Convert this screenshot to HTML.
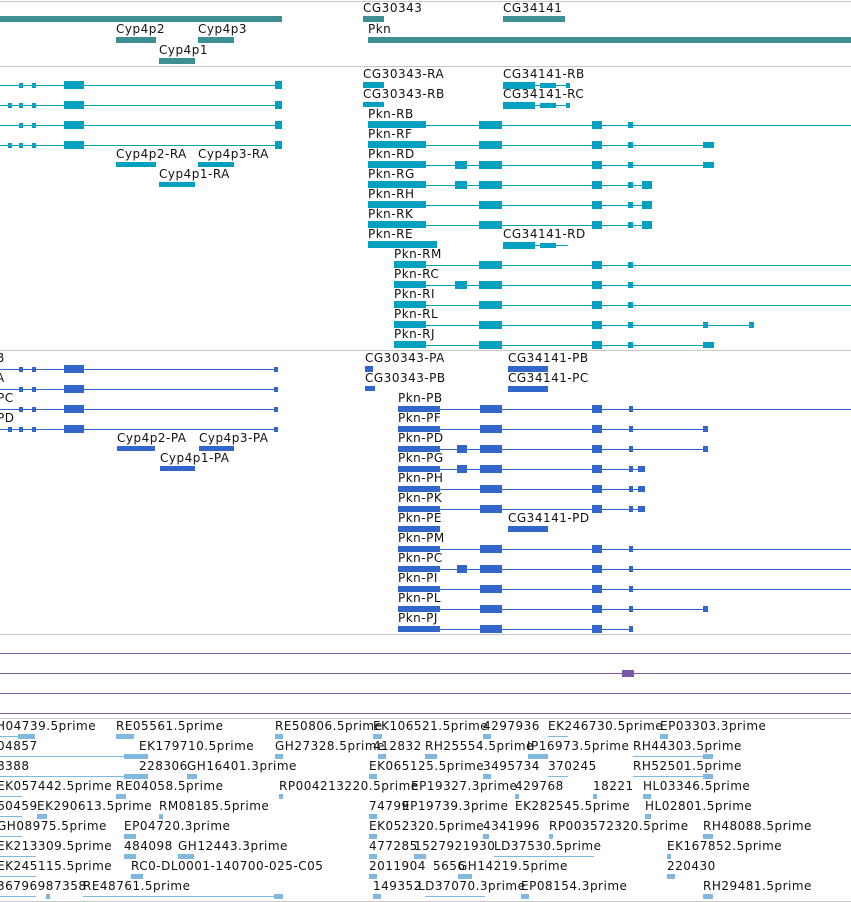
<!DOCTYPE html>
<html><head><meta charset="utf-8"><style>
body{margin:0;width:851px;height:902px;overflow:hidden;background:#fff;position:relative;font-family:"DejaVu Sans","Liberation Sans",sans-serif;font-size:12px;color:#111}
div{position:absolute}
.t{white-space:nowrap;line-height:14px;letter-spacing:0.5px}
.g{height:1px;background:#c8c8c8;left:0;width:851px}
.p{height:1px;background:#7a5aa8;left:0;width:851px}
.a{background:#3d8f91}
.b{background:#00a0c0}
.c{background:#3366cc}
.d{background:#80b8e0}
</style></head><body>
<div class="g" style="top:1px"></div>
<div class="g" style="top:66px"></div>
<div class="g" style="top:350px"></div>
<div class="g" style="top:634px"></div>
<div class="p" style="top:653px"></div>
<div class="p" style="top:673px"></div>
<div class="p" style="top:693px"></div>
<div class="p" style="top:713px"></div>
<div style="left:622px;top:670px;width:12px;height:7px;background:#7a5aa8"></div>
<div class="g" style="top:718px"></div>
<div class="g" style="top:901px"></div>

<div class="a" style="left:0;top:16px;width:282px;height:6px"></div>
<div class="t" style="left:363px;top:1px">CG30343</div>
<div class="a" style="left:363px;top:16px;width:21px;height:6px"></div>
<div class="t" style="left:503px;top:1px">CG34141</div>
<div class="a" style="left:503px;top:16px;width:62px;height:6px"></div>
<div class="t" style="left:116px;top:22px">Cyp4p2</div>
<div class="a" style="left:116px;top:37px;width:40px;height:6px"></div>
<div class="t" style="left:198px;top:22px">Cyp4p3</div>
<div class="a" style="left:198px;top:37px;width:36px;height:6px"></div>
<div class="t" style="left:159px;top:43px">Cyp4p1</div>
<div class="a" style="left:159px;top:58px;width:36px;height:6px"></div>
<div class="t" style="left:368px;top:22px">Pkn</div>
<div class="a" style="left:368px;top:37px;width:483px;height:6px"></div>

<div class="b" style="left:0;top:85px;width:282px;height:1px"></div>
<div class="b" style="left:0;top:105px;width:282px;height:1px"></div>
<div class="b" style="left:0;top:125px;width:282px;height:1px"></div>
<div class="b" style="left:0;top:145px;width:282px;height:1px"></div>
<div class="b" style="left:64px;top:81px;width:20px;height:8px"></div>
<div class="b" style="left:64px;top:101px;width:20px;height:8px"></div>
<div class="b" style="left:64px;top:121px;width:20px;height:8px"></div>
<div class="b" style="left:64px;top:141px;width:20px;height:8px"></div>
<div class="b" style="left:275px;top:81px;width:7px;height:8px"></div>
<div class="b" style="left:275px;top:101px;width:7px;height:8px"></div>
<div class="b" style="left:275px;top:121px;width:7px;height:8px"></div>
<div class="b" style="left:275px;top:141px;width:7px;height:8px"></div>
<div class="b" style="left:19px;top:83px;width:4px;height:5px"></div><div class="b" style="left:32px;top:83px;width:4px;height:5px"></div>
<div class="b" style="left:8px;top:103px;width:4px;height:5px"></div><div class="b" style="left:19px;top:103px;width:4px;height:5px"></div><div class="b" style="left:32px;top:103px;width:4px;height:5px"></div>
<div class="b" style="left:19px;top:123px;width:4px;height:5px"></div><div class="b" style="left:32px;top:123px;width:4px;height:5px"></div>
<div class="b" style="left:8px;top:143px;width:4px;height:5px"></div><div class="b" style="left:19px;top:143px;width:4px;height:5px"></div><div class="b" style="left:32px;top:143px;width:4px;height:5px"></div>
<div class="t" style="left:116px;top:147px">Cyp4p2-RA</div>
<div class="b" style="left:116px;top:162px;width:40px;height:5px"></div>
<div class="t" style="left:198px;top:147px">Cyp4p3-RA</div>
<div class="b" style="left:198px;top:162px;width:36px;height:5px"></div>
<div class="t" style="left:159px;top:167px">Cyp4p1-RA</div>
<div class="b" style="left:159px;top:182px;width:36px;height:5px"></div>

<div class="t" style="left:363px;top:67px">CG30343-RA</div>
<div class="b" style="left:363px;top:82px;width:21px;height:6px"></div>
<div class="t" style="left:363px;top:87px">CG30343-RB</div>
<div class="b" style="left:363px;top:102px;width:21px;height:5px"></div>
<div class="t" style="left:503px;top:67px">CG34141-RB</div>
<div class="b" style="left:503px;top:82px;width:32px;height:7px"></div><div class="b" style="left:535px;top:85px;width:35px;height:1px"></div><div class="b" style="left:540px;top:83px;width:16px;height:5px"></div><div class="b" style="left:566px;top:83px;width:4px;height:5px"></div>
<div class="t" style="left:503px;top:87px">CG34141-RC</div>
<div class="b" style="left:503px;top:102px;width:32px;height:7px"></div><div class="b" style="left:535px;top:105px;width:35px;height:1px"></div><div class="b" style="left:540px;top:103px;width:16px;height:5px"></div><div class="b" style="left:566px;top:103px;width:4px;height:5px"></div>

<div class="t" style="left:368px;top:107px">Pkn-RB</div>
<div class="b" style="left:368px;top:121px;width:58px;height:7px"></div><div class="b" style="left:426px;top:125px;width:425px;height:1px"></div><div class="b" style="left:479px;top:121px;width:23px;height:8px"></div><div class="b" style="left:592px;top:121px;width:10px;height:8px"></div><div class="b" style="left:628px;top:122px;width:5px;height:6px"></div>
<div class="t" style="left:368px;top:127px">Pkn-RF</div>
<div class="b" style="left:368px;top:141px;width:58px;height:7px"></div><div class="b" style="left:426px;top:145px;width:288px;height:1px"></div><div class="b" style="left:479px;top:141px;width:23px;height:8px"></div><div class="b" style="left:592px;top:141px;width:10px;height:8px"></div><div class="b" style="left:628px;top:142px;width:5px;height:6px"></div><div class="b" style="left:703px;top:142px;width:11px;height:6px"></div>
<div class="t" style="left:368px;top:147px">Pkn-RD</div>
<div class="b" style="left:368px;top:161px;width:58px;height:7px"></div><div class="b" style="left:426px;top:165px;width:288px;height:1px"></div><div class="b" style="left:455px;top:161px;width:12px;height:8px"></div><div class="b" style="left:479px;top:161px;width:23px;height:8px"></div><div class="b" style="left:592px;top:161px;width:10px;height:8px"></div><div class="b" style="left:628px;top:162px;width:5px;height:6px"></div><div class="b" style="left:703px;top:162px;width:11px;height:6px"></div>
<div class="t" style="left:368px;top:167px">Pkn-RG</div>
<div class="b" style="left:368px;top:181px;width:58px;height:7px"></div><div class="b" style="left:426px;top:185px;width:226px;height:1px"></div><div class="b" style="left:455px;top:181px;width:12px;height:8px"></div><div class="b" style="left:479px;top:181px;width:23px;height:8px"></div><div class="b" style="left:592px;top:181px;width:10px;height:8px"></div><div class="b" style="left:628px;top:182px;width:5px;height:6px"></div><div class="b" style="left:642px;top:181px;width:10px;height:8px"></div>
<div class="t" style="left:368px;top:187px">Pkn-RH</div>
<div class="b" style="left:368px;top:201px;width:58px;height:7px"></div><div class="b" style="left:426px;top:205px;width:226px;height:1px"></div><div class="b" style="left:479px;top:201px;width:23px;height:8px"></div><div class="b" style="left:592px;top:201px;width:10px;height:8px"></div><div class="b" style="left:628px;top:202px;width:5px;height:6px"></div><div class="b" style="left:642px;top:201px;width:10px;height:8px"></div>
<div class="t" style="left:368px;top:207px">Pkn-RK</div>
<div class="b" style="left:368px;top:221px;width:58px;height:7px"></div><div class="b" style="left:426px;top:225px;width:226px;height:1px"></div><div class="b" style="left:479px;top:221px;width:23px;height:8px"></div><div class="b" style="left:592px;top:221px;width:10px;height:8px"></div><div class="b" style="left:628px;top:222px;width:5px;height:6px"></div><div class="b" style="left:642px;top:221px;width:10px;height:8px"></div>
<div class="t" style="left:368px;top:227px">Pkn-RE</div>
<div class="b" style="left:368px;top:241px;width:69px;height:7px"></div>
<div class="t" style="left:503px;top:227px">CG34141-RD</div>
<div class="b" style="left:503px;top:242px;width:32px;height:7px"></div><div class="b" style="left:535px;top:245px;width:33px;height:1px"></div><div class="b" style="left:540px;top:243px;width:16px;height:5px"></div>
<div class="t" style="left:394px;top:247px">Pkn-RM</div>
<div class="b" style="left:394px;top:261px;width:32px;height:7px"></div><div class="b" style="left:426px;top:265px;width:425px;height:1px"></div><div class="b" style="left:479px;top:261px;width:23px;height:8px"></div><div class="b" style="left:592px;top:261px;width:10px;height:8px"></div><div class="b" style="left:628px;top:262px;width:5px;height:6px"></div>
<div class="t" style="left:394px;top:267px">Pkn-RC</div>
<div class="b" style="left:394px;top:281px;width:32px;height:7px"></div><div class="b" style="left:426px;top:285px;width:425px;height:1px"></div><div class="b" style="left:455px;top:281px;width:12px;height:8px"></div><div class="b" style="left:479px;top:281px;width:23px;height:8px"></div><div class="b" style="left:592px;top:281px;width:10px;height:8px"></div><div class="b" style="left:628px;top:282px;width:5px;height:6px"></div>
<div class="t" style="left:394px;top:287px">Pkn-RI</div>
<div class="b" style="left:394px;top:301px;width:32px;height:7px"></div><div class="b" style="left:426px;top:305px;width:425px;height:1px"></div><div class="b" style="left:479px;top:301px;width:23px;height:8px"></div><div class="b" style="left:592px;top:301px;width:10px;height:8px"></div><div class="b" style="left:628px;top:302px;width:5px;height:6px"></div>
<div class="t" style="left:394px;top:307px">Pkn-RL</div>
<div class="b" style="left:394px;top:321px;width:32px;height:7px"></div><div class="b" style="left:426px;top:325px;width:327px;height:1px"></div><div class="b" style="left:479px;top:321px;width:23px;height:8px"></div><div class="b" style="left:592px;top:321px;width:10px;height:8px"></div><div class="b" style="left:628px;top:322px;width:5px;height:6px"></div><div class="b" style="left:703px;top:322px;width:5px;height:6px"></div><div class="b" style="left:749px;top:322px;width:5px;height:6px"></div>
<div class="t" style="left:394px;top:327px">Pkn-RJ</div>
<div class="b" style="left:394px;top:341px;width:32px;height:7px"></div><div class="b" style="left:426px;top:345px;width:288px;height:1px"></div><div class="b" style="left:479px;top:341px;width:23px;height:8px"></div><div class="b" style="left:592px;top:341px;width:10px;height:8px"></div><div class="b" style="left:628px;top:342px;width:5px;height:6px"></div><div class="b" style="left:703px;top:342px;width:11px;height:6px"></div>

<div class="t" style="left:-4px;top:351px">B</div>
<div class="t" style="left:-4px;top:371px">A</div>
<div class="t" style="left:-3px;top:391px">PC</div>
<div class="t" style="left:-3px;top:411px">PD</div>
<div class="c" style="left:0;top:369px;width:278px;height:1px"></div>
<div class="c" style="left:0;top:389px;width:278px;height:1px"></div>
<div class="c" style="left:0;top:409px;width:278px;height:1px"></div>
<div class="c" style="left:0;top:429px;width:278px;height:1px"></div>
<div class="c" style="left:64px;top:365px;width:20px;height:8px"></div>
<div class="c" style="left:64px;top:385px;width:20px;height:8px"></div>
<div class="c" style="left:64px;top:405px;width:20px;height:8px"></div>
<div class="c" style="left:64px;top:425px;width:20px;height:8px"></div>
<div class="c" style="left:19px;top:367px;width:4px;height:5px"></div><div class="c" style="left:32px;top:367px;width:4px;height:5px"></div><div class="c" style="left:274px;top:367px;width:4px;height:5px"></div>
<div class="c" style="left:19px;top:387px;width:4px;height:5px"></div><div class="c" style="left:32px;top:387px;width:4px;height:5px"></div><div class="c" style="left:274px;top:387px;width:4px;height:5px"></div>
<div class="c" style="left:19px;top:407px;width:4px;height:5px"></div><div class="c" style="left:32px;top:407px;width:4px;height:5px"></div><div class="c" style="left:274px;top:407px;width:4px;height:5px"></div>
<div class="c" style="left:8px;top:427px;width:4px;height:5px"></div><div class="c" style="left:19px;top:427px;width:4px;height:5px"></div><div class="c" style="left:32px;top:427px;width:4px;height:5px"></div><div class="c" style="left:274px;top:427px;width:4px;height:5px"></div>
<div class="t" style="left:117px;top:431px">Cyp4p2-PA</div>
<div class="c" style="left:117px;top:446px;width:38px;height:5px"></div>
<div class="t" style="left:199px;top:431px">Cyp4p3-PA</div>
<div class="c" style="left:199px;top:446px;width:35px;height:5px"></div>
<div class="t" style="left:160px;top:451px">Cyp4p1-PA</div>
<div class="c" style="left:160px;top:466px;width:35px;height:5px"></div>

<div class="t" style="left:365px;top:351px">CG30343-PA</div>
<div class="c" style="left:365px;top:366px;width:8px;height:6px"></div>
<div class="t" style="left:365px;top:371px">CG30343-PB</div>
<div class="c" style="left:365px;top:386px;width:10px;height:5px"></div>
<div class="t" style="left:508px;top:351px">CG34141-PB</div>
<div class="c" style="left:508px;top:366px;width:40px;height:6px"></div>
<div class="t" style="left:508px;top:371px">CG34141-PC</div>
<div class="c" style="left:508px;top:386px;width:40px;height:6px"></div>

<div class="t" style="left:398px;top:391px">Pkn-PB</div>
<div class="c" style="left:398px;top:406px;width:42px;height:6px"></div><div class="c" style="left:440px;top:409px;width:411px;height:1px"></div><div class="c" style="left:480px;top:405px;width:22px;height:8px"></div><div class="c" style="left:592px;top:405px;width:10px;height:8px"></div><div class="c" style="left:629px;top:406px;width:4px;height:6px"></div>
<div class="t" style="left:398px;top:411px">Pkn-PF</div>
<div class="c" style="left:398px;top:426px;width:42px;height:6px"></div><div class="c" style="left:440px;top:429px;width:267px;height:1px"></div><div class="c" style="left:480px;top:425px;width:22px;height:8px"></div><div class="c" style="left:592px;top:425px;width:10px;height:8px"></div><div class="c" style="left:629px;top:426px;width:4px;height:6px"></div><div class="c" style="left:703px;top:426px;width:5px;height:6px"></div>
<div class="t" style="left:398px;top:431px">Pkn-PD</div>
<div class="c" style="left:398px;top:446px;width:42px;height:6px"></div><div class="c" style="left:440px;top:449px;width:267px;height:1px"></div><div class="c" style="left:457px;top:445px;width:10px;height:8px"></div><div class="c" style="left:480px;top:445px;width:22px;height:8px"></div><div class="c" style="left:592px;top:445px;width:10px;height:8px"></div><div class="c" style="left:629px;top:446px;width:4px;height:6px"></div><div class="c" style="left:703px;top:446px;width:5px;height:6px"></div>
<div class="t" style="left:398px;top:451px">Pkn-PG</div>
<div class="c" style="left:398px;top:466px;width:42px;height:6px"></div><div class="c" style="left:440px;top:469px;width:205px;height:1px"></div><div class="c" style="left:457px;top:465px;width:10px;height:8px"></div><div class="c" style="left:480px;top:465px;width:22px;height:8px"></div><div class="c" style="left:592px;top:465px;width:10px;height:8px"></div><div class="c" style="left:629px;top:466px;width:4px;height:6px"></div><div class="c" style="left:638px;top:466px;width:7px;height:6px"></div>
<div class="t" style="left:398px;top:471px">Pkn-PH</div>
<div class="c" style="left:398px;top:486px;width:42px;height:6px"></div><div class="c" style="left:440px;top:489px;width:205px;height:1px"></div><div class="c" style="left:480px;top:485px;width:22px;height:8px"></div><div class="c" style="left:592px;top:485px;width:10px;height:8px"></div><div class="c" style="left:629px;top:486px;width:4px;height:6px"></div><div class="c" style="left:638px;top:486px;width:7px;height:6px"></div>
<div class="t" style="left:398px;top:491px">Pkn-PK</div>
<div class="c" style="left:398px;top:506px;width:42px;height:6px"></div><div class="c" style="left:440px;top:509px;width:205px;height:1px"></div><div class="c" style="left:480px;top:505px;width:22px;height:8px"></div><div class="c" style="left:592px;top:505px;width:10px;height:8px"></div><div class="c" style="left:629px;top:506px;width:4px;height:6px"></div><div class="c" style="left:638px;top:506px;width:7px;height:6px"></div>
<div class="t" style="left:398px;top:511px">Pkn-PE</div>
<div class="c" style="left:398px;top:526px;width:42px;height:6px"></div>
<div class="t" style="left:508px;top:511px">CG34141-PD</div>
<div class="c" style="left:508px;top:526px;width:40px;height:6px"></div>
<div class="t" style="left:398px;top:531px">Pkn-PM</div>
<div class="c" style="left:398px;top:546px;width:42px;height:6px"></div><div class="c" style="left:440px;top:549px;width:411px;height:1px"></div><div class="c" style="left:480px;top:545px;width:22px;height:8px"></div><div class="c" style="left:592px;top:545px;width:10px;height:8px"></div><div class="c" style="left:629px;top:546px;width:4px;height:6px"></div>
<div class="t" style="left:398px;top:551px">Pkn-PC</div>
<div class="c" style="left:398px;top:566px;width:42px;height:6px"></div><div class="c" style="left:440px;top:569px;width:411px;height:1px"></div><div class="c" style="left:457px;top:565px;width:10px;height:8px"></div><div class="c" style="left:480px;top:565px;width:22px;height:8px"></div><div class="c" style="left:592px;top:565px;width:10px;height:8px"></div><div class="c" style="left:629px;top:566px;width:4px;height:6px"></div>
<div class="t" style="left:398px;top:571px">Pkn-PI</div>
<div class="c" style="left:398px;top:586px;width:42px;height:6px"></div><div class="c" style="left:440px;top:589px;width:411px;height:1px"></div><div class="c" style="left:480px;top:585px;width:22px;height:8px"></div><div class="c" style="left:592px;top:585px;width:10px;height:8px"></div><div class="c" style="left:629px;top:586px;width:4px;height:6px"></div>
<div class="t" style="left:398px;top:591px">Pkn-PL</div>
<div class="c" style="left:398px;top:606px;width:42px;height:6px"></div><div class="c" style="left:440px;top:609px;width:267px;height:1px"></div><div class="c" style="left:480px;top:605px;width:22px;height:8px"></div><div class="c" style="left:592px;top:605px;width:10px;height:8px"></div><div class="c" style="left:629px;top:606px;width:4px;height:6px"></div><div class="c" style="left:703px;top:606px;width:5px;height:6px"></div>
<div class="t" style="left:398px;top:611px">Pkn-PJ</div>
<div class="c" style="left:398px;top:626px;width:42px;height:6px"></div><div class="c" style="left:440px;top:629px;width:193px;height:1px"></div><div class="c" style="left:480px;top:625px;width:22px;height:8px"></div><div class="c" style="left:592px;top:625px;width:10px;height:8px"></div><div class="c" style="left:629px;top:626px;width:4px;height:6px"></div>

<div class="t" style="left:-4px;top:719px">H04739.5prime</div>
<div class="t" style="left:116px;top:719px">RE05561.5prime</div>
<div class="t" style="left:275px;top:719px">RE50806.5prime</div>
<div class="t" style="left:373px;top:719px">EK106521.5prime</div>
<div class="t" style="left:483px;top:719px">4297936</div>
<div class="t" style="left:548px;top:719px">EK246730.5prime</div>
<div class="t" style="left:660px;top:719px">EP03303.3prime</div>
<div class="d" style="left:0;top:736px;width:35px;height:1px"></div><div class="d" style="left:18px;top:734px;width:17px;height:5px"></div><div class="d" style="left:116px;top:734px;width:18px;height:5px"></div><div class="d" style="left:275px;top:734px;width:8px;height:5px"></div><div class="d" style="left:373px;top:734px;width:9px;height:5px"></div><div class="d" style="left:483px;top:734px;width:8px;height:5px"></div><div class="d" style="left:548px;top:736px;width:20px;height:1px"></div><div class="d" style="left:660px;top:734px;width:8px;height:5px"></div>

<div class="t" style="left:-3px;top:739px">04857</div>
<div class="t" style="left:139px;top:739px">EK179710.5prime</div>
<div class="t" style="left:275px;top:739px">GH27328.5prime</div>
<div class="t" style="left:373px;top:739px">412832</div>
<div class="t" style="left:425px;top:739px">RH25554.5prime</div>
<div class="t" style="left:527px;top:739px">IP16973.5prime</div>
<div class="t" style="left:633px;top:739px">RH44303.5prime</div>
<div class="d" style="left:0;top:756px;width:130px;height:1px"></div><div class="d" style="left:124px;top:754px;width:24px;height:5px"></div><div class="d" style="left:275px;top:754px;width:8px;height:5px"></div><div class="d" style="left:378px;top:754px;width:8px;height:5px"></div><div class="d" style="left:425px;top:754px;width:12px;height:5px"></div><div class="d" style="left:528px;top:754px;width:20px;height:5px"></div><div class="d" style="left:633px;top:756px;width:80px;height:1px"></div><div class="d" style="left:703px;top:754px;width:10px;height:5px"></div>

<div class="t" style="left:-3px;top:759px">8388</div>
<div class="t" style="left:139px;top:759px">228306</div>
<div class="t" style="left:187px;top:759px">GH16401.3prime</div>
<div class="t" style="left:369px;top:759px">EK065125.5prime</div>
<div class="t" style="left:483px;top:759px">3495734</div>
<div class="t" style="left:548px;top:759px">370245</div>
<div class="t" style="left:633px;top:759px">RH52501.5prime</div>
<div class="d" style="left:0;top:776px;width:130px;height:1px"></div><div class="d" style="left:124px;top:774px;width:24px;height:5px"></div><div class="d" style="left:187px;top:774px;width:10px;height:5px"></div><div class="d" style="left:369px;top:774px;width:8px;height:5px"></div><div class="d" style="left:483px;top:774px;width:8px;height:5px"></div><div class="d" style="left:548px;top:776px;width:20px;height:1px"></div><div class="d" style="left:633px;top:776px;width:80px;height:1px"></div><div class="d" style="left:703px;top:774px;width:10px;height:5px"></div>

<div class="t" style="left:-3px;top:779px">EK057442.5prime</div>
<div class="t" style="left:116px;top:779px">RE04058.5prime</div>
<div class="t" style="left:279px;top:779px">RP004213220.5prime</div>
<div class="t" style="left:411px;top:779px">EP19327.3prime</div>
<div class="t" style="left:515px;top:779px">429768</div>
<div class="t" style="left:593px;top:779px">18221</div>
<div class="t" style="left:643px;top:779px">HL03346.5prime</div>
<div class="d" style="left:0;top:796px;width:22px;height:1px"></div><div class="d" style="left:116px;top:794px;width:10px;height:5px"></div><div class="d" style="left:279px;top:794px;width:4px;height:5px"></div><div class="d" style="left:515px;top:794px;width:4px;height:5px"></div><div class="d" style="left:593px;top:794px;width:4px;height:5px"></div><div class="d" style="left:643px;top:794px;width:8px;height:5px"></div>

<div class="t" style="left:-3px;top:799px">60459</div>
<div class="t" style="left:37px;top:799px">EK290613.5prime</div>
<div class="t" style="left:159px;top:799px">RM08185.5prime</div>
<div class="t" style="left:369px;top:799px">74799</div>
<div class="t" style="left:402px;top:799px">EP19739.3prime</div>
<div class="t" style="left:515px;top:799px">EK282545.5prime</div>
<div class="t" style="left:645px;top:799px">HL02801.5prime</div>
<div class="d" style="left:0;top:816px;width:22px;height:1px"></div><div class="d" style="left:37px;top:814px;width:10px;height:5px"></div><div class="d" style="left:159px;top:814px;width:4px;height:5px"></div><div class="d" style="left:369px;top:814px;width:8px;height:5px"></div><div class="d" style="left:645px;top:814px;width:6px;height:5px"></div>

<div class="t" style="left:-3px;top:819px">GH08975.5prime</div>
<div class="t" style="left:124px;top:819px">EP04720.3prime</div>
<div class="t" style="left:369px;top:819px">EK052320.5prime</div>
<div class="t" style="left:483px;top:819px">4341996</div>
<div class="t" style="left:549px;top:819px">RP003572320.5prime</div>
<div class="t" style="left:703px;top:819px">RH48088.5prime</div>
<div class="d" style="left:0;top:836px;width:22px;height:1px"></div><div class="d" style="left:124px;top:834px;width:12px;height:5px"></div><div class="d" style="left:369px;top:834px;width:8px;height:5px"></div><div class="d" style="left:483px;top:834px;width:6px;height:5px"></div><div class="d" style="left:549px;top:834px;width:4px;height:5px"></div><div class="d" style="left:703px;top:834px;width:10px;height:5px"></div>

<div class="t" style="left:-3px;top:839px">EK213309.5prime</div>
<div class="t" style="left:124px;top:839px">484098</div>
<div class="t" style="left:178px;top:839px">GH12443.3prime</div>
<div class="t" style="left:369px;top:839px">477285</div>
<div class="t" style="left:414px;top:839px">1527921930</div>
<div class="t" style="left:494px;top:839px">LD37530.5prime</div>
<div class="t" style="left:667px;top:839px">EK167852.5prime</div>
<div class="d" style="left:0;top:856px;width:36px;height:1px"></div><div class="d" style="left:124px;top:854px;width:12px;height:5px"></div><div class="d" style="left:178px;top:854px;width:16px;height:5px"></div><div class="d" style="left:369px;top:854px;width:8px;height:5px"></div><div class="d" style="left:414px;top:854px;width:12px;height:5px"></div><div class="d" style="left:494px;top:856px;width:100px;height:1px"></div><div class="d" style="left:667px;top:854px;width:4px;height:5px"></div>

<div class="t" style="left:-3px;top:859px">EK245115.5prime</div>
<div class="t" style="left:131px;top:859px">RC0-DL0001-140700-025-C05</div>
<div class="t" style="left:369px;top:859px">2011904</div>
<div class="t" style="left:433px;top:859px">5656</div>
<div class="t" style="left:458px;top:859px">GH14219.5prime</div>
<div class="t" style="left:667px;top:859px">220430</div>
<div class="d" style="left:0;top:876px;width:36px;height:1px"></div><div class="d" style="left:131px;top:874px;width:12px;height:5px"></div><div class="d" style="left:369px;top:874px;width:8px;height:5px"></div><div class="d" style="left:458px;top:874px;width:14px;height:5px"></div><div class="d" style="left:667px;top:874px;width:8px;height:5px"></div>

<div class="t" style="left:-3px;top:879px">36796987358</div>
<div class="t" style="left:83px;top:879px">RE48761.5prime</div>
<div class="t" style="left:373px;top:879px">149352</div>
<div class="t" style="left:418px;top:879px">LD37070.3prime</div>
<div class="t" style="left:521px;top:879px">EP08154.3prime</div>
<div class="t" style="left:703px;top:879px">RH29481.5prime</div>
<div class="d" style="left:0;top:896px;width:36px;height:1px"></div><div class="d" style="left:46px;top:894px;width:4px;height:5px"></div><div class="d" style="left:83px;top:896px;width:200px;height:1px"></div><div class="d" style="left:274px;top:894px;width:9px;height:5px"></div><div class="d" style="left:373px;top:894px;width:8px;height:5px"></div><div class="d" style="left:425px;top:896px;width:60px;height:1px"></div><div class="d" style="left:521px;top:894px;width:8px;height:5px"></div><div class="d" style="left:703px;top:894px;width:10px;height:5px"></div>
</body></html>
